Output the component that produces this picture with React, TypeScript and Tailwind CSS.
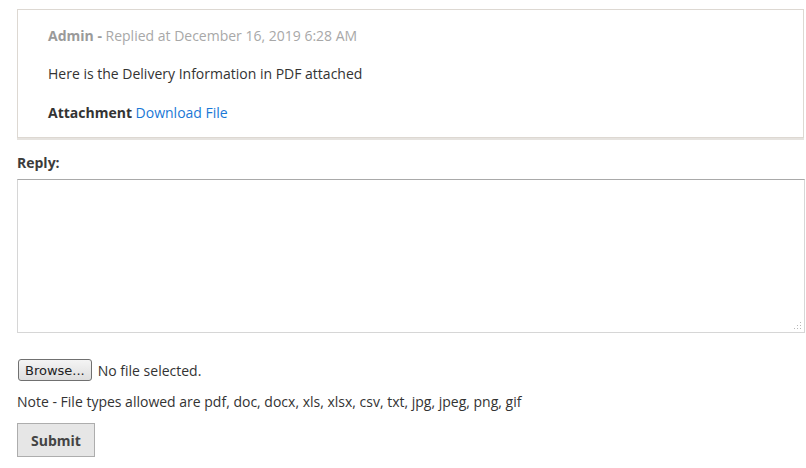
import React from 'react';

const App: React.FC = () => {
  return (
    <div className="w-[806px] h-[468px] bg-white overflow-hidden text-[14px] text-[#333]" style={{ fontFamily: '"Open Sans", "DejaVu Sans", sans-serif' }}>
      <div className="pt-[9px] pl-[17px] pr-[2px]">
        {/* Previous reply */}
        <div className="border border-[#ddd8d2] shadow-[0_2px_0_#e6e3df] pl-[30px] pt-[15px] pb-[13px]">
          <p className="leading-[22px] text-[#a8a8a8]">
            <span className="font-bold text-[#9a9a9a]">Admin -</span> Replied at December 16, 2019 6:28 AM
          </p>
          <p className="mt-[16px] leading-[22px] text-[#333]">Here is the Delivery Information in PDF attached</p>
          <p className="mt-[17px] leading-[22px]">
            <span className="font-bold text-[#333]">Attachment</span>{' '}
            <a className="text-[#1a78d6]">Download File</a>
          </p>
        </div>

        {/* Reply form */}
        <label className="block mt-[14px] font-bold text-[#3c3c3c] leading-[22px]">Reply:</label>
        <div className="relative mt-[5px] mr-[-1px]">
          <textarea className="block w-full h-[154px] border border-[#d6d6d6] border-t-[#a9a9a9] resize-none outline-none" />
          <svg className="absolute right-[3px] bottom-[3px]" width="8" height="8" viewBox="0 0 8 8">
            <g fill="#b8b8b8">
              <rect x="6" y="0" width="1" height="1" />
              <rect x="3" y="3" width="1" height="1" />
              <rect x="6" y="3" width="1" height="1" />
              <rect x="0" y="6" width="1" height="1" />
              <rect x="3" y="6" width="1" height="1" />
              <rect x="6" y="6" width="1" height="1" />
            </g>
          </svg>
        </div>

        <div className="mt-[26px] flex items-center gap-[6px]">
          <button className="h-[22px] px-[6px] ml-[1px] text-[#222] leading-none rounded-[3px] border border-[#707070] bg-gradient-to-b from-[#f4f4f4] to-[#dedede]" style={{ fontFamily: '"DejaVu Sans", sans-serif', fontSize: '13px' }}>
            Browse...
          </button>
          <span className="text-[#333]">No file selected.</span>
        </div>

        <p className="mt-[10px] leading-[22px] text-[#333]">Note - File types allowed are pdf, doc, docx, xls, xlsx, csv, txt, jpg, jpeg, png, gif</p>

        <button className="mt-[10px] w-[78px] h-[34px] bg-[#e6e6e6] border border-[#adadad] font-bold text-[#444]">Submit</button>
      </div>
    </div>
  );
};

export default App;
